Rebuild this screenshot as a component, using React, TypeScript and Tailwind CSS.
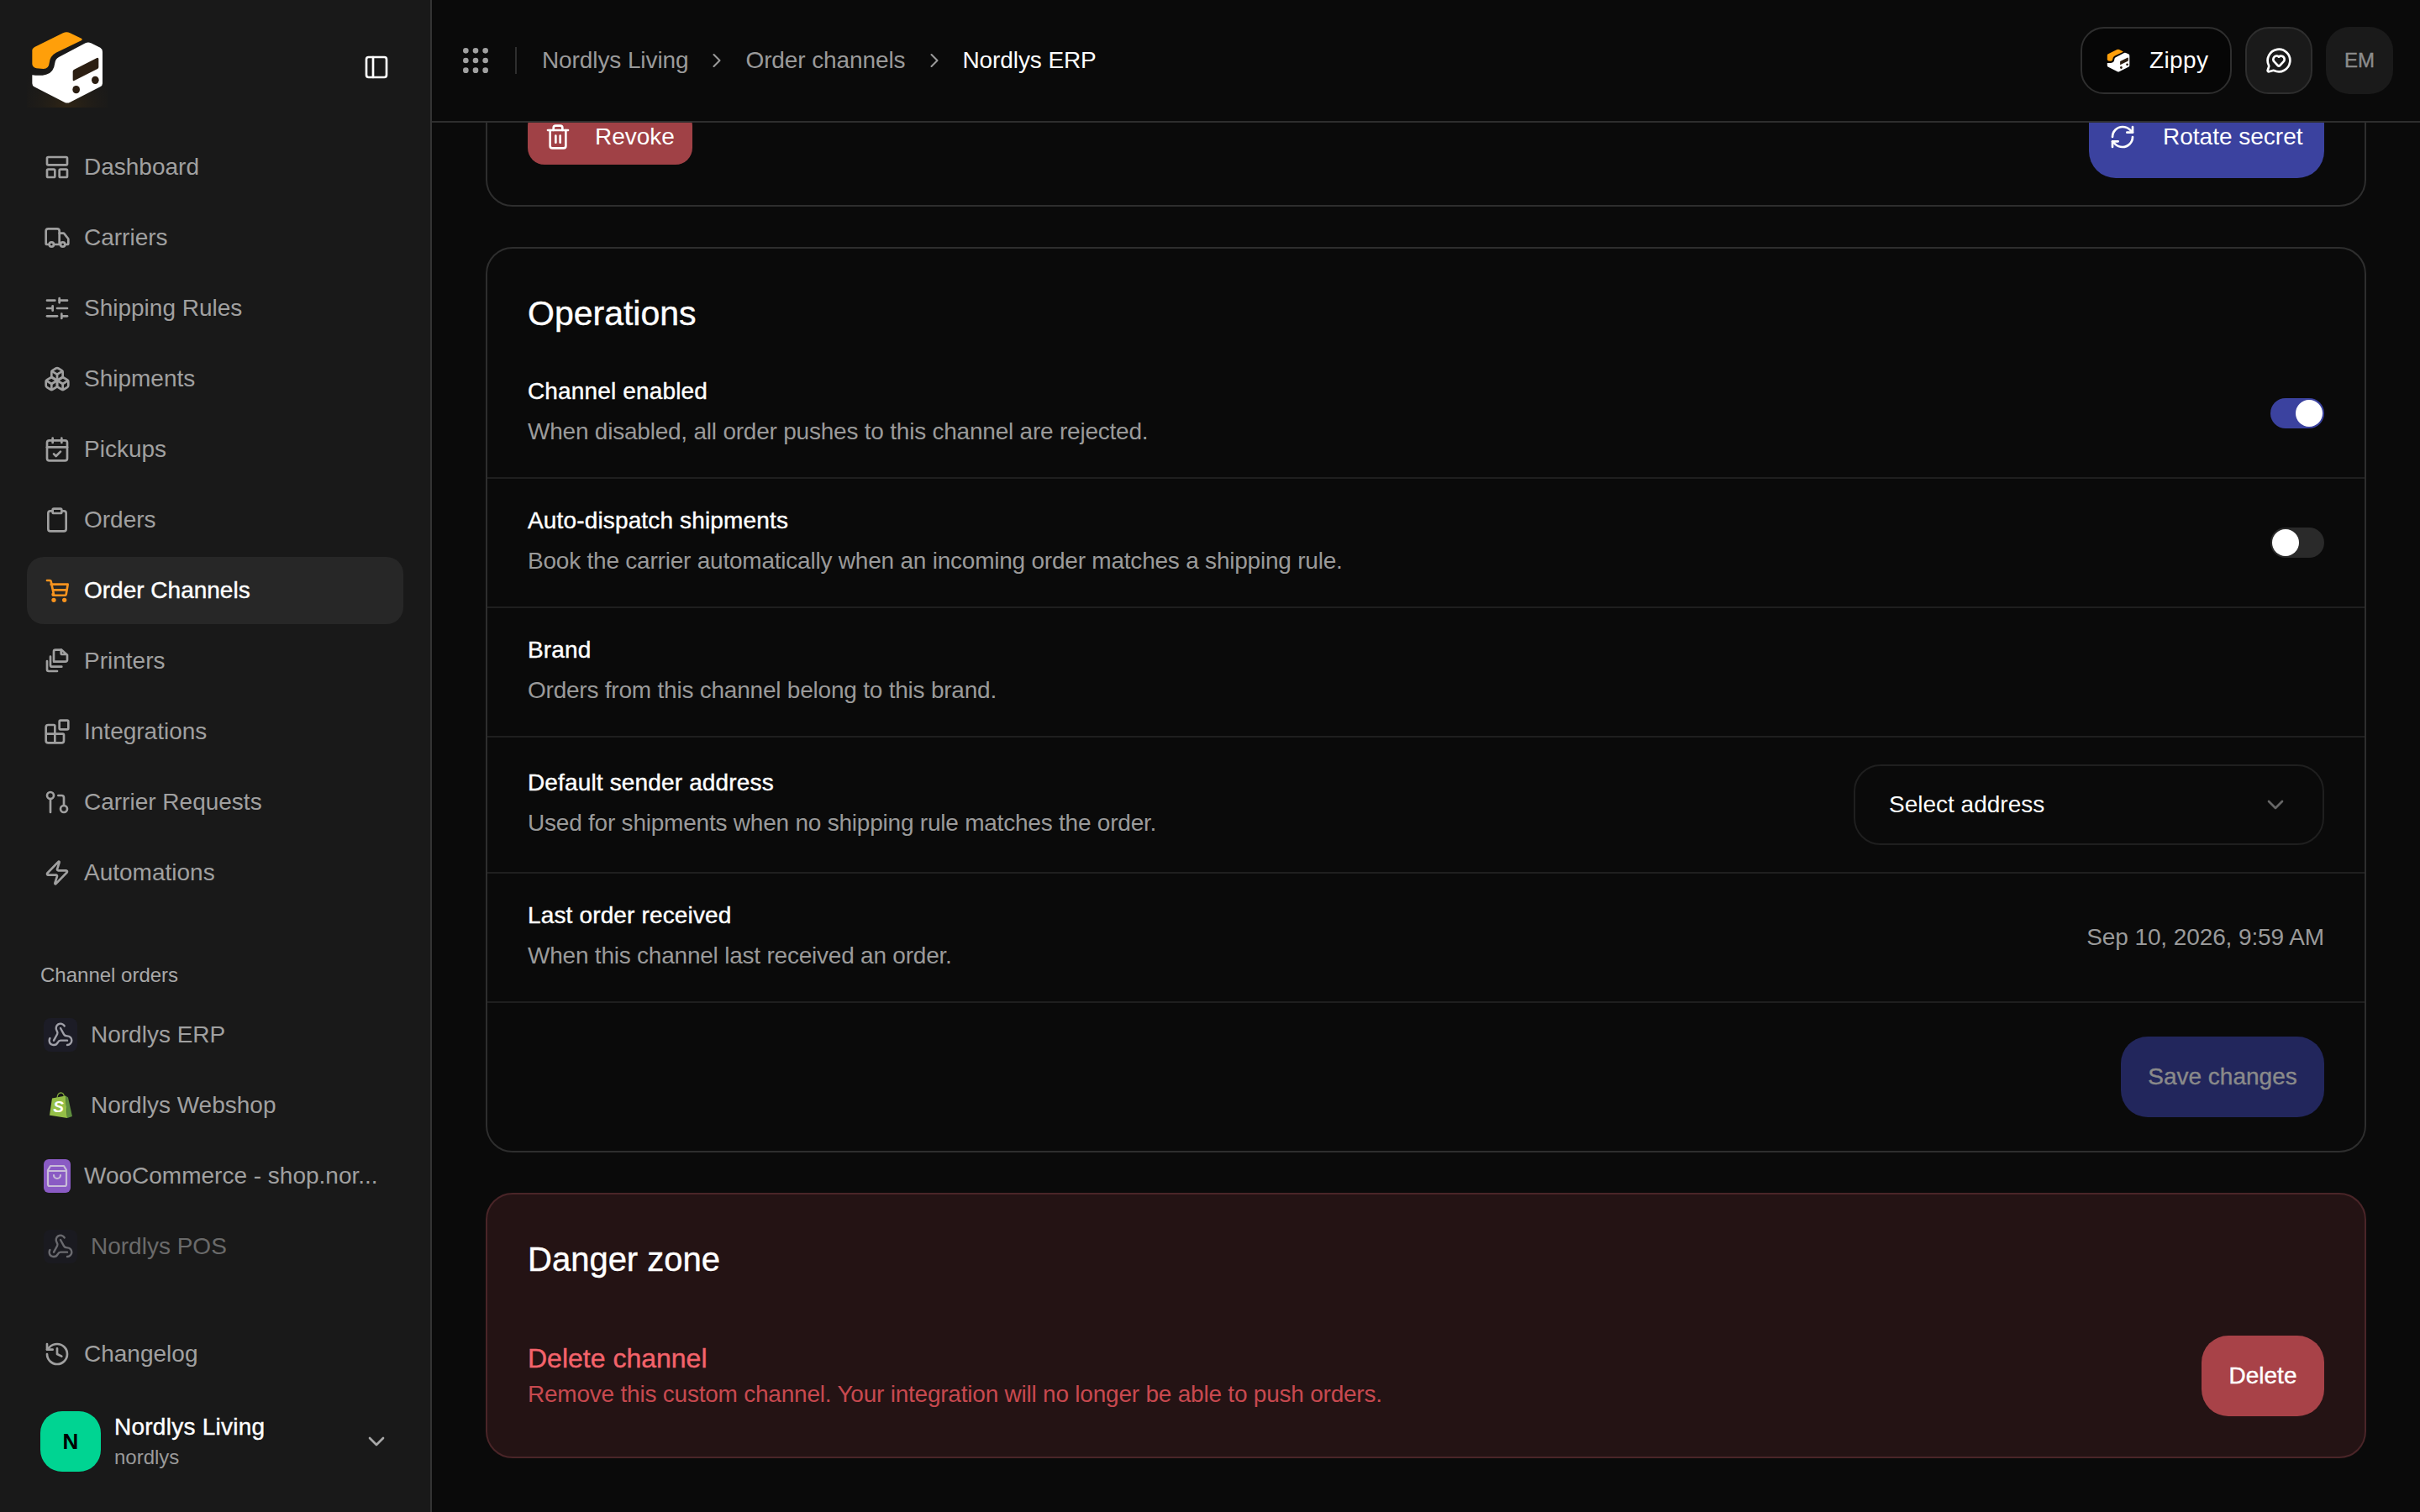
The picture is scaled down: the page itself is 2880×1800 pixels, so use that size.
import React from "react";
import {
  LayoutPanelTop, Truck, SlidersHorizontal, Boxes, CalendarCheck, Clipboard, Blocks,
  GitPullRequest, Zap, History, ChevronDown, ChevronRight, Webhook, PanelLeft, Grip, Trash2, RefreshCw, MessageCircleHeart,
} from "lucide-react";

const med = "[-webkit-text-stroke:0.4px_currentColor]";

function Logo({ className, glow }: { className: string; glow?: boolean }) {
  return (
    <svg viewBox="0 0 360 360" className={className}>
      {glow && (
        <>
          <defs>
            <radialGradient id="logoGlow" cx="50%" cy="100%" r="70%">
              <stop offset="0%" stopColor="#3a2a12" stopOpacity="0.7" />
              <stop offset="100%" stopColor="#191919" stopOpacity="0" />
            </radialGradient>
          </defs>
          <rect x="36" y="36" width="288" height="288" fill="url(#logoGlow)" />
        </>
      )}
      <path d="M55 120Q55 112 65 107L165 58Q178 52 190 58L232 78Q236 82 230 85L140 128Q118 140 116 165Q114 186 95 186L70 184Q55 180 55 168Z" fill="#ff9f0a" />
      <path d="M55 208Q85 212 105 206Q132 200 136 165Q138 150 150 144L245 94Q255 89 265 94L298 110Q306 115 306 125V238Q306 246 298 250L190 305Q180 310 170 305L62 250Q55 246 55 238Z" fill="#ffffff" />
      <path d="M205 188L286 147Q292 145 292 151V180Q292 184 288 186L205 228Q200 230 200 225V195Q200 190 205 188Z" fill="#2b1e12" />
      <ellipse cx="212" cy="260" rx="13" ry="14" fill="#2b1e12" />
      <ellipse cx="280" cy="226" rx="13" ry="14" fill="#2b1e12" />
    </svg>
  );
}

function PrintersIcon() {
  return (
    <svg viewBox="0 0 24 24" className="w-[32px] h-[32px] mx-[2px] shrink-0" fill="none" stroke="currentColor" strokeWidth="2" strokeLinecap="round" strokeLinejoin="round">
      <path d="M20 6h-3.500a1 1 0 0 1-1-1V2" />
      <path d="M9 12V3.500A1.500 1.500 0 0 1 10.500 2H16l5 4.500V11a1.500 1.500 0 0 1-1.500 1.500H9" />
      <path d="M6 8v7.500A1.500 1.500 0 0 0 7.500 17H16" />
      <path d="M3 12v7.500A1.500 1.500 0 0 0 4.500 21H12" />
    </svg>
  );
}

function CartIcon() {
  return (
    <svg viewBox="0 0 24 24" className="w-[32px] h-[32px] mx-[2px] shrink-0 text-[#f7931e]" fill="none" stroke="currentColor" strokeWidth="2" strokeLinecap="round" strokeLinejoin="round">
      <path d="M3 3h2.500a1 1 0 0 1 1 .8L9 15.500" />
      <path d="M6.500 6.500H21.500L20 15.500a1 1 0 0 1-1 .8H9a1 1 0 0 1-1-1" />
      <path d="M8.500 11.500H20" />
      <circle cx="9" cy="20.500" r="1" fill="currentColor" />
      <circle cx="18.500" cy="20.500" r="1" fill="currentColor" />
    </svg>
  );
}

const icls = "shrink-0 mx-[2px]";
const nav: { label: string; icon: React.ReactNode; active?: boolean }[] = [
  { label: "Dashboard", icon: <LayoutPanelTop size={32} strokeWidth={2} className={icls} /> },
  { label: "Carriers", icon: <Truck size={32} strokeWidth={2} className={icls} /> },
  { label: "Shipping Rules", icon: <SlidersHorizontal size={32} strokeWidth={2} className={icls} /> },
  { label: "Shipments", icon: <Boxes size={32} strokeWidth={2} className={icls} /> },
  { label: "Pickups", icon: <CalendarCheck size={32} strokeWidth={2} className={icls} /> },
  { label: "Orders", icon: <Clipboard size={32} strokeWidth={2} className={icls} /> },
  { label: "Order Channels", icon: <CartIcon />, active: true },
  { label: "Printers", icon: <PrintersIcon /> },
  { label: "Integrations", icon: <Blocks size={32} strokeWidth={2} className={icls} /> },
  { label: "Carrier Requests", icon: <GitPullRequest size={32} strokeWidth={2} className={icls} /> },
  { label: "Automations", icon: <Zap size={32} strokeWidth={2} className={icls} /> },
];

function NavItem({ label, icon, active }: { label: string; icon: React.ReactNode; active?: boolean }) {
  return (
    <div className={`h-[80px] rounded-[20px] pl-[18px] flex items-center gap-[14px] text-[28px] ${active ? `bg-[#272727] text-white ${med}` : "text-[#a0a0a0]"}`}>
      {icon}
      <span>{label}</span>
    </div>
  );
}

function WebhookBox() {
  return (
    <div className="w-[40px] h-[40px] shrink-0 rounded-[8px] bg-[#1c1c26] flex items-center justify-center">
      <Webhook size={32} strokeWidth={1.8} className="text-[#a0a0a8]" />
    </div>
  );
}

function ShopifyIcon() {
  return (
    <div className="w-[40px] h-[40px] shrink-0 flex items-center justify-center">
      <svg viewBox="0 0 28 32" className="w-[28px] h-[32px]">
        <path d="M10 7Q10.500 1 14.500 0.800Q18 1 18.500 6" fill="none" stroke="#7fa63c" strokeWidth="1.200" />
        <path d="M1 27.500L4 7.500L20 4.500L22 31L0 27.500Z" fill="#95bf47" />
        <path d="M20 4.500L23 6.500L28 29L22 31Z" fill="#5e8e3e" />
        <text x="11.500" y="24" textAnchor="middle" fontFamily="'Liberation Sans', sans-serif" fontWeight="700" fontStyle="italic" fontSize="19" fill="#ffffff">S</text>
      </svg>
    </div>
  );
}

function WooIcon() {
  return (
    <div className="w-[32px] h-[40px] shrink-0 rounded-[6px] bg-[#8a5bc4] flex items-center justify-center">
      <svg viewBox="0 0 28 28" className="w-[28px] h-[28px]" fill="none" stroke="#c8bcd8" strokeWidth="2.200" strokeLinecap="round" strokeLinejoin="round">
        <path d="M6 2h16l3 5v17a2 2 0 0 1-2 2H5a2 2 0 0 1-2-2V7Z" />
        <path d="M3 8h22" />
        <path d="M10 13a4 4 0 0 0 8 0" />
      </svg>
    </div>
  );
}

function Row({ label, sub, children }: { label: string; sub: string; children?: React.ReactNode }) {
  return (
    <div className="px-[48px] py-[32px] border-b-2 border-[#1f1f1f] flex items-center justify-between">
      <div className="pb-[2px]">
        <div className={`text-[28px] leading-[36px] tracking-[0.15px] text-white ${med}`}>{label}</div>
        <div className="text-[28px] leading-[40px] mt-[10px] tracking-[-0.22px] text-[#9a9a9a]">{sub}</div>
      </div>
      {children}
    </div>
  );
}

export default function App() {
  return (
    <div className="w-[2880px] h-[1800px] flex overflow-hidden bg-[#0a0a0a] font-['Liberation_Sans',sans-serif]">
      <aside className="w-[514px] shrink-0 h-full flex flex-col bg-[#191919] border-r-2 border-[#333333]">
        <div className="h-[159px] shrink-0 pl-[20px] pr-[46px] flex items-center justify-between">
          <Logo className="w-[120px] h-[120px]" glow />
          <PanelLeft size={32} strokeWidth={2} className="text-white mr-[2px]" />
        </div>
        <nav className="px-[32px] flex flex-col gap-[4px]">
          {nav.map((n) => <NavItem key={n.label} {...n} />)}
        </nav>
        <div className="mt-[66px] pl-[48px] text-[24px] leading-[32px] text-[#a8a8a8]">Channel orders</div>
        <div className="mt-[15px] px-[32px] flex flex-col gap-[4px]">
          <div className="h-[80px] pl-[20px] flex items-center gap-[16px] text-[28px] text-[#a0a0a0]"><WebhookBox /><span>Nordlys ERP</span></div>
          <div className="h-[80px] pl-[20px] flex items-center gap-[16px] text-[28px] text-[#a0a0a0]"><ShopifyIcon /><span>Nordlys Webshop</span></div>
          <div className="h-[80px] pl-[20px] flex items-center gap-[16px] text-[28px] text-[#a0a0a0]"><WooIcon /><span>WooCommerce - shop.nor...</span></div>
          <div className="h-[80px] pl-[20px] flex items-center gap-[16px] text-[28px] text-[#a0a0a0] opacity-60"><WebhookBox /><span>Nordlys POS</span></div>
        </div>
        <div className="mt-auto px-[32px]">
          <NavItem label="Changelog" icon={<History size={32} strokeWidth={2} className={icls} />} />
        </div>
        <div className="mt-[28px] mb-[48px] pl-[48px] pr-[46px] flex items-center gap-[16px]">
          <div className="w-[72px] h-[72px] rounded-[26px] bg-[#00d492] flex items-center justify-center text-black text-[26px] font-bold">N</div>
          <div className="flex-1">
            <div className={`text-[28px] leading-[36px] tracking-[0.25px] text-white ${med}`}>Nordlys Living</div>
            <div className="text-[24px] leading-[32px] mt-[2px] text-[#9a9a9a]">nordlys</div>
          </div>
          <ChevronDown size={32} strokeWidth={2} className="text-[#a8a8a8] mr-[2px]" />
        </div>
      </aside>

      <main className="flex-1 min-w-0 h-full flex flex-col">
        <header className="h-[146px] shrink-0 border-b-2 border-[#2e2e2e] pl-[32px] pr-[32px] flex items-center bg-[#0a0a0a] relative z-10">
          <Grip size={40} strokeWidth={2} className="text-[#a0a0a0]" />
          <div className="w-[2px] h-[32px] bg-[#2e2e2e] ml-[27px] mr-[30px]" />
          <div className="flex items-center gap-[20px] text-[28px] tracking-[-0.1px] text-[#9a9a9a]">
            <span>Nordlys Living</span>
            <ChevronRight size={28} strokeWidth={1.8} />
            <span>Order channels</span>
            <ChevronRight size={28} strokeWidth={1.8} />
            <span className="text-white">Nordlys ERP</span>
          </div>
          <div className="ml-auto flex items-center gap-[16px]">
            <div className="h-[80px] w-[180px] rounded-[28px] border-2 border-[#2e2e2e] bg-[#060606] flex items-center pl-[28px] gap-[22px] text-[28px] tracking-[0.4px] text-white">
              <Logo className="w-[38px] h-[38px] -mx-[4px]" />
              <span>Zippy</span>
            </div>
            <div className="w-[80px] h-[80px] rounded-[28px] border-2 border-[#2e2e2e] bg-[#1a1a1a] flex items-center justify-center">
              <MessageCircleHeart size={32} strokeWidth={2} className="text-white" />
            </div>
            <div className={`w-[80px] h-[80px] rounded-[28px] bg-[#1a1a1a] flex items-center justify-center text-[24px] text-[#8c8c8c] ${med}`}>EM</div>
          </div>
        </header>

        <div className="flex-1 min-h-0 overflow-hidden px-[64px]">
          <section className="-mt-[40px] rounded-[32px] border-2 border-[#2e2e2e] pt-[6px] pb-[32px] px-[48px] flex items-center justify-between">
            <div className="h-[66px] w-[196px] rounded-[20px] bg-[#a04146] flex items-center pl-[20px] gap-[28px] text-[28px] text-white">
              <Trash2 size={32} strokeWidth={2} />
              <span>Revoke</span>
            </div>
            <div className="h-[98px] w-[280px] rounded-[32px] bg-[#3b429f] flex items-center pl-[24px] gap-[32px] text-[28px] text-white">
              <RefreshCw size={32} strokeWidth={2} />
              <span>Rotate secret</span>
            </div>
          </section>

          <section className="mt-[48px] rounded-[32px] border-2 border-[#2e2e2e]">
            <h2 className={`px-[48px] pt-[53px] pb-[19px] text-[41px] leading-[48px] text-white font-normal ${med}`}>Operations</h2>
            <Row label="Channel enabled" sub="When disabled, all order pushes to this channel are rejected.">
              <div className="w-[64px] h-[36px] rounded-full bg-[#3b429f] flex items-center justify-end pr-[2px]">
                <div className="w-[32px] h-[32px] rounded-full bg-white" />
              </div>
            </Row>
            <Row label="Auto-dispatch shipments" sub="Book the carrier automatically when an incoming order matches a shipping rule.">
              <div className="w-[64px] h-[36px] rounded-full bg-[#2a2a2a] flex items-center pl-[2px]">
                <div className="w-[32px] h-[32px] rounded-full bg-white" />
              </div>
            </Row>
            <Row label="Brand" sub="Orders from this channel belong to this brand." />
            <Row label="Default sender address" sub="Used for shipments when no shipping rule matches the order.">
              <div className="w-[560px] h-[96px] rounded-[32px] border-2 border-[#1f1f1f] flex items-center justify-between pl-[40px] pr-[40px] text-[28px] text-white">
                <span>Select address</span>
                <ChevronDown size={32} strokeWidth={2} className="text-[#666666]" />
              </div>
            </Row>
            <Row label="Last order received" sub="When this channel last received an order.">
              <span className="text-[28px] tracking-[-0.1px] text-[#9a9a9a]">Sep 10, 2026, 9:59 AM</span>
            </Row>
            <div className="px-[48px] py-[40px] flex justify-end">
              <div className={`h-[96px] w-[242px] rounded-[32px] bg-[#22265c] flex items-center justify-center text-[28px] text-[#8a8a8a] ${med}`}>Save changes</div>
            </div>
          </section>

          <section className="mt-[48px] rounded-[32px] border-2 border-[#4a2528] bg-[#241314]">
            <h2 className={`px-[48px] pt-[53px] pb-[67px] text-[40px] leading-[48px] text-white font-normal ${med}`}>Danger zone</h2>
            <div className="px-[48px] pb-[48px] flex items-center justify-between">
              <div>
                <div className={`text-[32px] leading-[40px] text-[#f4636b] ${med}`}>Delete channel</div>
                <div className="text-[28px] leading-[40px] mt-[3px] tracking-[-0.22px] text-[#c8494f]">Remove this custom channel. Your integration will no longer be able to push orders.</div>
              </div>
              <div className={`h-[96px] w-[146px] rounded-[32px] bg-[#a84248] flex items-center justify-center text-[28px] text-white ${med}`}>Delete</div>
            </div>
          </section>
        </div>
      </main>
    </div>
  );
}
